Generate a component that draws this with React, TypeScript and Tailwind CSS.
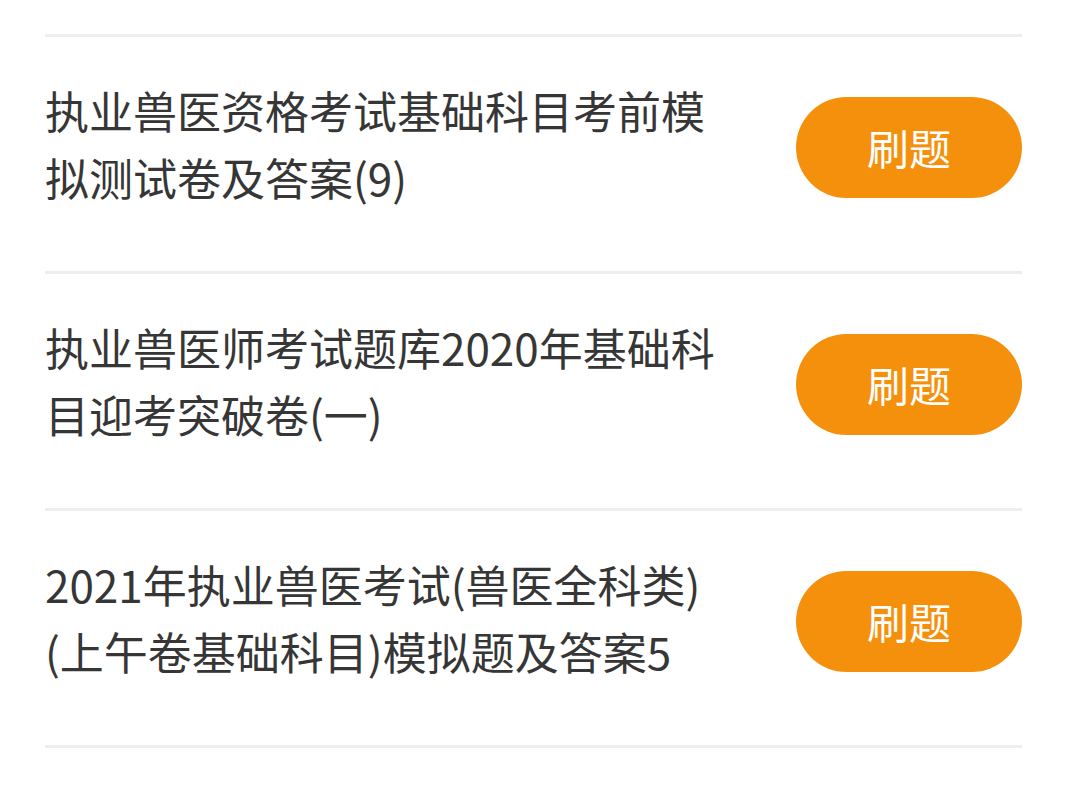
import React from 'react';

interface PaperItem {
  id: number;
  title: string;
}

const papers: PaperItem[] = [
  { id: 1, title: '执业兽医资格考试基础科目考前模拟测试卷及答案(9)' },
  { id: 2, title: '执业兽医师考试题库2020年基础科目迎考突破卷(一)' },
  { id: 3, title: '2021年执业兽医考试(兽医全科类)(上午卷基础科目)模拟题及答案5' },
];

const PaperRow: React.FC<{ item: PaperItem }> = ({ item }) => {
  return (
    <div className="border-t-[3px] border-[#eeeeee]">
      <div className="h-[234px] flex items-center justify-between pb-[14px]">
        <p className="w-[690px] mb-[6px] text-[44px] leading-[67px] text-[#363636]">{item.title}</p>
        <button className="w-[226px] h-[101px] rounded-full bg-[#f5900c] text-white text-[42px] leading-none flex items-center justify-center shrink-0">
          刷题
        </button>
      </div>
    </div>
  );
};

export default function App() {
  return (
    <div
      className="w-full h-[800px] overflow-hidden bg-white px-[45px]"
      style={{ fontFamily: '"Noto Sans CJK SC", "Noto Sans", sans-serif' }}
    >
      {/* tail of the previous row */}
      <div className="h-[34px]" />
      {papers.map((p) => (
        <PaperRow key={p.id} item={p} />
      ))}
      <div className="border-t-[3px] border-[#eeeeee]" />
    </div>
  );
}
